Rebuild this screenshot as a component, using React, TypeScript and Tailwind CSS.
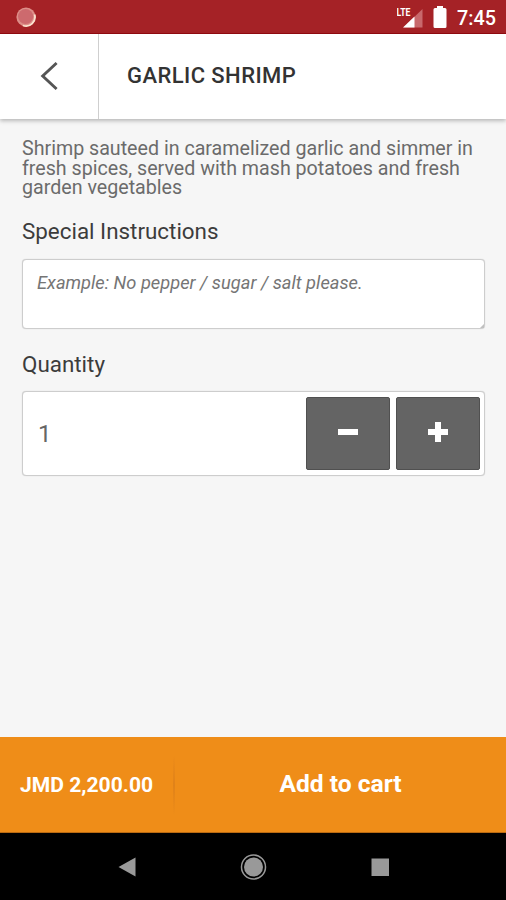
import React from "react";

function StatusBar() {
  return (
    <div className="flex h-[34px] items-center border-b border-[#930a10] bg-[#a52226] pl-4 pr-[10px]">
      <svg width="20" height="20" viewBox="0 0 20 20" className="mt-px">
        <circle cx="10" cy="10" r="9.6" fill="#dd8f89" />
        <path d="M18.6 7.5A9 9 0 0 1 7 18.5" fill="none" stroke="#fbe3cf" strokeWidth="1.8" />
        <circle cx="9.6" cy="9.5" r="7.6" fill="#cd6a6e" />
      </svg>
      <svg width="28" height="24" viewBox="0 0 28 24" className="mr-[8px] ml-auto">
        <path d="M25.500 4v18.500H6.500z" fill="#c8696c" />
        <path d="M17.500 11.500v11H6z" fill="#fff" />
        <text x="-0.5" y="11.300" fill="#fff" fontSize="11.5" fontWeight="700" textLength="14" lengthAdjust="spacingAndGlyphs">LTE</text>
      </svg>
      <svg width="14" height="22" viewBox="0 0 14 22" className="mr-[10px]">
        <path d="M4 0h6v2h2q1.500 0 1.500 1.500v17q0 1.500-1.500 1.500h-10q-1.500 0-1.500-1.500v-17q0-1.500 1.500-1.500h2z" fill="#fff" />
      </svg>
      <span className="mt-[4px] w-[39px] text-[19.800px] leading-none font-medium text-white">7:45</span>
    </div>
  );
}

function Header() {
  return (
    <header className="flex h-[85px] bg-white shadow-[0_2px_4px_rgba(0,0,0,0.25)]">
      <button className="flex w-[99px] items-center justify-center border-r border-[#cfcfcf] pb-px">
        <svg width="20" height="30" viewBox="0 0 20 30" fill="none" stroke="#555" strokeWidth="2.900">
          <path d="M17.600 2L3.700 15L17.600 28" />
        </svg>
      </button>
      <h1 className="flex items-center pb-[2px] pl-[28px] text-[22px] font-medium tracking-[0.430px] text-[#333]">GARLIC SHRIMP</h1>
    </header>
  );
}

function Quantity() {
  return (
    <div className="flex h-[85px] rounded-[4px] border border-[#cdcdcd] bg-white py-[5px] pr-[4px] pl-[15px] shadow-[0_0_1px_rgba(0,0,0,0.2)]">
      <span className="flex flex-1 items-center text-[24px] text-[#666]">1</span>
      <div className="flex gap-[6px]">
        <button className="flex w-[84px] items-center justify-center rounded-[2px] border border-[#505050] bg-[#646464] pb-[3px]">
          <svg width="22" height="22" viewBox="0 0 22 22"><path d="M1 8h20v6H1z" fill="#fff" /></svg>
        </button>
        <button className="flex w-[84px] items-center justify-center rounded-[2px] border border-[#505050] bg-[#646464] pb-[3px]">
          <svg width="22" height="22" viewBox="0 0 22 22"><path d="M8 1h6v7h7v6h-7v7h-6v-7H1V8h7z" fill="#fff" /></svg>
        </button>
      </div>
    </div>
  );
}

export default function App() {
  return (
    <div className="flex h-[900px] w-[506px] flex-col overflow-hidden bg-[#f6f6f6] font-['Roboto',sans-serif]">
      <StatusBar />
      <Header />
      <main className="flex-1 pt-[20px] pr-[21px] pl-[22px]">
        <p className="text-[19.650px] leading-[19.500px] whitespace-nowrap text-[#6b6b6b]">
          Shrimp sauteed in caramelized garlic and simmer in
          <br />
          fresh spices, served with mash potatoes and fresh
          <br />
          garden vegetables
        </p>
        <h2 className="mt-[18.500px] text-[22.400px] leading-[30px] text-[#3c3c3c]">Special Instructions</h2>
        <div className="mt-[13px] flex h-[70px] items-start justify-between rounded-[4px] border border-[#cdcdcd] bg-white pl-[14px] shadow-[0_0_1px_rgba(0,0,0,0.2)]">
          <span className="mt-[11px] text-[18.300px] leading-[24px] text-[#757575] italic">Example: No pepper / sugar / salt please.</span>
          <svg width="4" height="4" viewBox="0 0 5 5" className="self-end"><path d="M5 0v5H0z" fill="#c0c0c0" /></svg>
        </div>
        <h2 className="mt-[20px] mb-[12px] text-[22.400px] leading-[30px] text-[#3c3c3c]">Quantity</h2>
        <Quantity />
      </main>
      <footer className="flex h-[96px] items-center border-b border-[#b96a12] bg-[#ef8d18] text-white">
        <span className="w-[173px] pt-px pl-5 text-[21.100px] font-bold whitespace-nowrap">JMD 2,200.00</span>
        <span className="h-[60px] w-[2px] bg-linear-to-b from-[#ef8d18] via-[#e08219] to-[#ef8d18]" />
        <button className="flex-1 text-[24.600px] font-bold">Add to cart</button>
      </footer>
      <nav className="flex h-[67px] items-center bg-black">
        <svg width="506" height="40" viewBox="0 0 506 40">
          <path d="M118.500 20L135.500 10.500V29.500z" fill="#999" />
          <circle cx="253.500" cy="20" r="12" fill="none" stroke="#999" strokeWidth="1.500" />
          <circle cx="253.500" cy="20" r="9.500" fill="#999" />
          <path d="M371.500 11.500h17.500v17.500h-17.500z" fill="#999" />
        </svg>
      </nav>
    </div>
  );
}
